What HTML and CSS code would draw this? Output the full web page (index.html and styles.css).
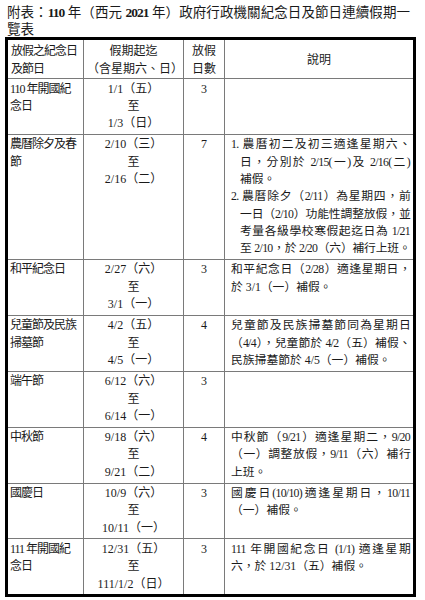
FILE: index.html
```html
<!DOCTYPE html>
<html lang="zh-Hant">
<head>
<meta charset="utf-8">
<title>附表</title>
<link rel="stylesheet" href="styles.css">
</head>
<body>
<div class="title">
  <span class="t1">附表：<b>110</b> 年（西元 <b>2021</b> 年）政府行政機關紀念日及節日連續假期一</span>
  <span class="t2">覽表</span>
</div>
<table class="tbl">
  <colgroup>
    <col class="c1"><col class="c2"><col class="c3"><col class="c4">
  </colgroup>
  <thead>
    <tr>
      <th class="h1">放假之紀念日<br>及節日</th>
      <th class="h2">假期起迄<br>（含星期六、日）</th>
      <th class="h3">放假<br>日數</th>
      <th class="h4">說明</th>
    </tr>
  </thead>
  <tbody>
    <tr>
      <td class="name">110 年開國紀<br>念日</td>
      <td class="date">1/1（五）<br>至<br>1/3（日）</td>
      <td class="num">3</td>
      <td class="desc"></td>
    </tr>
    <tr>
      <td class="name">農曆除夕及春<br>節</td>
      <td class="date">2/10（三）<br>至<br>2/16（二）</td>
      <td class="num">7</td>
      <td class="desc">
        <span class="ln j">1. 農曆初二及初三適逢星期六、</span>
        <span class="ln j in">日，分別於 2/15(一)及 2/16(二)</span>
        <span class="ln in">補假。</span>
        <span class="ln j">2. 農曆除夕（2/11）為星期四，前</span>
        <span class="ln j in">一日（2/10）功能性調整放假，並</span>
        <span class="ln j in">考量各級學校寒假起迄日為 1/21</span>
        <span class="ln j in">至 2/10，於 2/20（六）補行上班。</span>
      </td>
    </tr>
    <tr>
      <td class="name">和平紀念日</td>
      <td class="date">2/27（六）<br>至<br>3/1（一）</td>
      <td class="num">3</td>
      <td class="desc">
        <span class="ln j">和平紀念日（2/28）適逢星期日，</span>
        <span class="ln">於 3/1（一）補假。</span>
      </td>
    </tr>
    <tr>
      <td class="name">兒童節及民族<br>掃墓節</td>
      <td class="date">4/2（五）<br>至<br>4/5（一）</td>
      <td class="num">4</td>
      <td class="desc">
        <span class="ln j">兒童節及民族掃墓節同為星期日</span>
        <span class="ln j">（4/4），兒童節於 4/2（五）補假、</span>
        <span class="ln">民族掃墓節於 4/5（一）補假。</span>
      </td>
    </tr>
    <tr>
      <td class="name">端午節</td>
      <td class="date">6/12（六）<br>至<br>6/14（一）</td>
      <td class="num">3</td>
      <td class="desc"></td>
    </tr>
    <tr>
      <td class="name">中秋節</td>
      <td class="date">9/18（六）<br>至<br>9/21（二）</td>
      <td class="num">4</td>
      <td class="desc">
        <span class="ln j">中秋節（9/21）適逢星期二，9/20</span>
        <span class="ln j">（一）調整放假，9/11（六）補行</span>
        <span class="ln">上班。</span>
      </td>
    </tr>
    <tr>
      <td class="name">國慶日</td>
      <td class="date">10/9（六）<br>至<br>10/11（一）</td>
      <td class="num">3</td>
      <td class="desc">
        <span class="ln j">國慶日(10/10)適逢星期日，10/11</span>
        <span class="ln">（一）補假。</span>
      </td>
    </tr>
    <tr>
      <td class="name">111 年開國紀<br>念日</td>
      <td class="date">12/31（五）<br>至<br>111/1/2（日）</td>
      <td class="num">3</td>
      <td class="desc">
        <span class="ln j">111 年開國紀念日 (1/1) 適逢星期</span>
        <span class="ln">六，於 12/31（五）補假。</span>
      </td>
    </tr>
  </tbody>
</table>
</body>
</html>
```

FILE: styles.css
```css
html, body {
  margin: 0;
  padding: 0;
  background: #fff;
}
body {
  font-family: "Liberation Serif", "Noto Sans CJK TC", serif;
  color: #1a1a1a;
  width: 425px;
}
.title {
  padding: 4px 0 0 7px;
  width: 402px;
  font-size: 13.5px;
  line-height: 17px;
}
.title .t1,
.title .t2 {
  display: block;
  height: 17px;
}
.title .t1 {
  white-space: nowrap;
  text-align: justify;
  text-align-last: justify;
  letter-spacing: -1px;
}
.title b {
  font-weight: bold;
}
.tbl {
  margin: -1px 0 0 5px;
  width: 411px;
  border-collapse: collapse;
  table-layout: fixed;
  border: 3px solid #000;
  font-size: 12px;
  line-height: 17.3px;
}
.c1 { width: 77px; }
.c2 { width: 100px; }
.c3 { width: 41px; }
.c4 { width: auto; }
.tbl th, .tbl td {
  border: 1px solid #7a7a7a;
  vertical-align: top;
  padding: 1.5px 3px;
  font-weight: normal;
}
.tbl th {
  line-height: 18px;
  padding: 2px 3px 0 3px;
  height: 36px;
}
.h1 { text-align: left; letter-spacing: -1px; }
.h2, .h3 { text-align: center; }
.h4 { text-align: center; vertical-align: middle !important; }
.name {
  text-align: left;
  letter-spacing: -1px;
  padding-left: 2px !important;
}
.date, .num { text-align: center; }
.desc {
  padding: 1.5px 3px 1.5px 6px !important;
  font-size: 11.8px;
}
.ln {
  display: block;
  height: 17.3px;
  white-space: nowrap;
}
.ln.j {
  text-align: justify;
  text-align-last: justify;
  letter-spacing: -0.7px;
}
.ln.in {
  padding-left: 9px;
}
```
